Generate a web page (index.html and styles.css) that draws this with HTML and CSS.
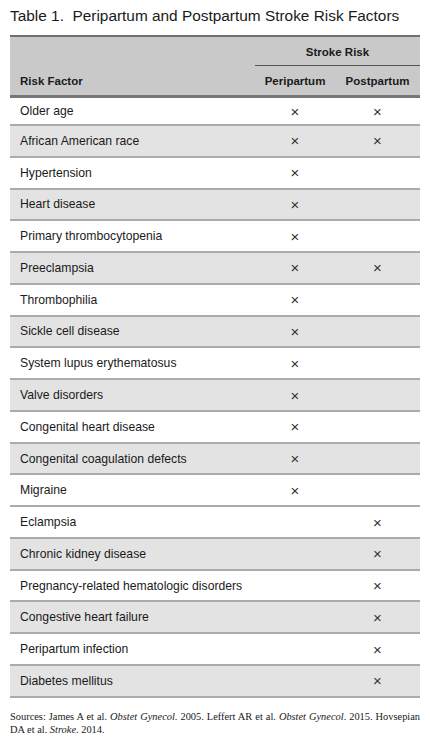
FILE: index.html
```html
<!DOCTYPE html>
<html>
<head>
<meta charset="utf-8">
<link rel="stylesheet" href="styles.css">
</head>
<body>
<div class="page">
  <h1 class="title">Table 1.&nbsp; Peripartum and Postpartum Stroke Risk Factors</h1>
  <table class="risk">
    <colgroup>
      <col class="col-a">
      <col class="col-b">
      <col class="col-c">
    </colgroup>
    <thead>
      <tr class="h1row">
        <th class="blank"></th>
        <th class="group" colspan="2">Stroke Risk</th>
      </tr>
      <tr class="h2row">
        <th class="lbl">Risk Factor</th>
        <th class="c1">Peripartum</th>
        <th class="c2">Postpartum</th>
      </tr>
    </thead>
    <tbody>
      <tr><td>Older age</td><td class="x">×</td><td class="x">×</td></tr>
      <tr class="g"><td>African American race</td><td class="x">×</td><td class="x">×</td></tr>
      <tr><td>Hypertension</td><td class="x">×</td><td class="x"></td></tr>
      <tr class="g"><td>Heart disease</td><td class="x">×</td><td class="x"></td></tr>
      <tr><td>Primary thrombocytopenia</td><td class="x">×</td><td class="x"></td></tr>
      <tr class="g"><td>Preeclampsia</td><td class="x">×</td><td class="x">×</td></tr>
      <tr><td>Thrombophilia</td><td class="x">×</td><td class="x"></td></tr>
      <tr class="g"><td>Sickle cell disease</td><td class="x">×</td><td class="x"></td></tr>
      <tr><td>System lupus erythematosus</td><td class="x">×</td><td class="x"></td></tr>
      <tr class="g"><td>Valve disorders</td><td class="x">×</td><td class="x"></td></tr>
      <tr><td>Congenital heart disease</td><td class="x">×</td><td class="x"></td></tr>
      <tr class="g"><td>Congenital coagulation defects</td><td class="x">×</td><td class="x"></td></tr>
      <tr><td>Migraine</td><td class="x">×</td><td class="x"></td></tr>
      <tr><td>Eclampsia</td><td class="x"></td><td class="x">×</td></tr>
      <tr class="g"><td>Chronic kidney disease</td><td class="x"></td><td class="x">×</td></tr>
      <tr><td>Pregnancy-related hematologic disorders</td><td class="x"></td><td class="x">×</td></tr>
      <tr class="g"><td>Congestive heart failure</td><td class="x"></td><td class="x">×</td></tr>
      <tr><td>Peripartum infection</td><td class="x"></td><td class="x">×</td></tr>
      <tr class="g"><td>Diabetes mellitus</td><td class="x"></td><td class="x">×</td></tr>
    </tbody>
  </table>
  <p class="sources">Sources: James A et al. <i>Obstet Gynecol</i>. 2005. Leffert AR et al. <i>Obstet Gynecol</i>. 2015. Hovsepian DA et al. <i>Stroke</i>. 2014.</p>
</div>
</body>
</html>
```
FILE: styles.css
```css
html, body {
  margin: 0;
  padding: 0;
  background: #fff;
}
.page {
  padding: 6px 10px 0 10px;
  font-family: "Liberation Sans", Arial, sans-serif;
  color: #1a1a1a;
}
.title {
  margin: 0;
  font-size: 15.4px;
  font-weight: normal;
  line-height: 20px;
  color: #1a1a1a;
  white-space: nowrap;
}
.risk {
  margin-top: 9px;
  width: 410px;
  border-collapse: collapse;
  table-layout: fixed;
}
.col-a { width: 245px; }
.col-b { width: 80px; }
.col-c { width: 85px; }
.risk th, .risk td {
  padding: 0;
}
.risk thead {
  background: #c9c9c9;
}
.h1row th {
  border-top: 2px solid #6f6f6f;
  height: 27px;
  font-size: 11.5px;
  font-weight: bold;
  color: #1a1a1a;
  vertical-align: middle;
  padding-top: 1px;
}
.h1row .group {
  border-bottom: 1px solid #555;
  text-align: center;
}
.h2row th {
  height: 28px;
  font-size: 11.5px;
  font-weight: bold;
  color: #1a1a1a;
  border-bottom: 3px solid #777;
  vertical-align: middle;
  padding-top: 1px;
}
.h2row .lbl {
  text-align: left;
  padding-left: 10px;
}
.h2row .c1, .h2row .c2 { text-align: center; }
.risk tbody td {
  height: 29.78px;
  border-bottom: 2px solid #ababab;
  font-size: 12.2px;
  color: #1a1a1a;
  vertical-align: middle;
  white-space: nowrap;
}
.risk tbody tr:first-child td {
  height: 26px;
}
.risk tbody td:first-child {
  padding-left: 10px;
}
.risk tbody tr.g td {
  background: #e3e3e3;
}
.risk td.x {
  text-align: center;
  font-size: 15px;
  color: #333;
}
.sources {
  margin: 12px 0 0 0;
  font-family: "Liberation Serif", "Times New Roman", serif;
  font-size: 10.4px;
  line-height: 13.5px;
  text-align: justify;
  color: #1a1a1a;
}
```
